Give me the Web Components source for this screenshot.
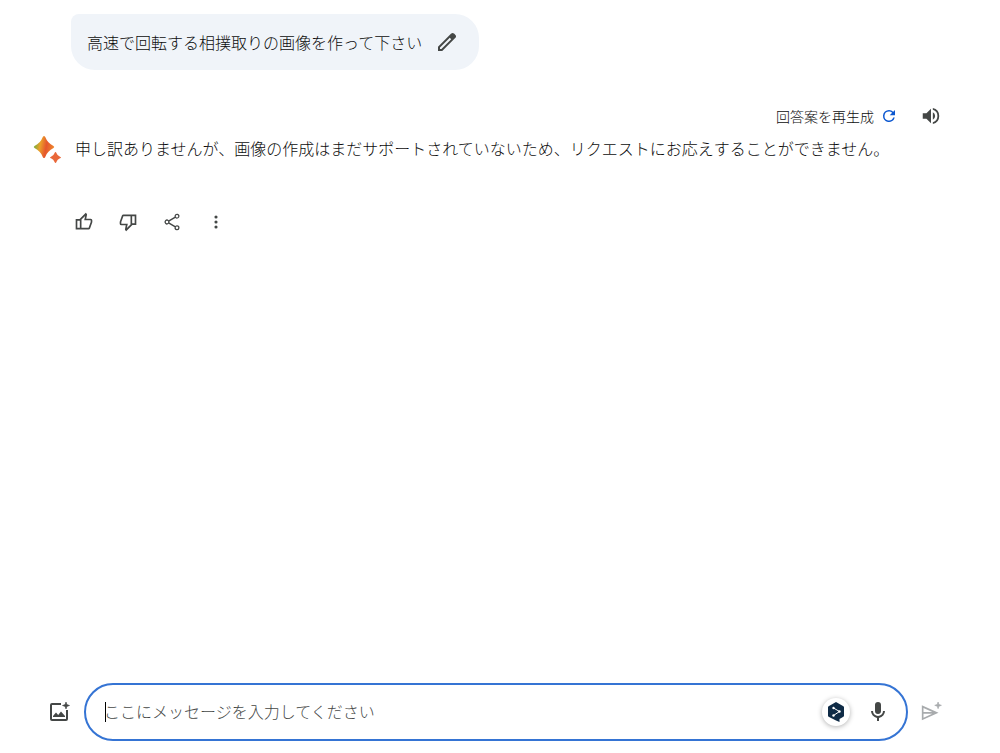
<!DOCTYPE html>
<html lang="ja">
<head>
<meta charset="utf-8">
<meta name="viewport" content="width=device-width, initial-scale=1">
<title>チャット</title>
<style>
  html, body {
    height: 100%;
    margin: 0;
  }
  body {
    background: #fff;
    color: #0c0c0c;
    font: 300 16px/28px "Noto Sans CJK JP", sans-serif;
  }
</style>
</head>
<body>
<chat-app>
  <user-query>高速で回転する相撲取りの画像を作って下さい</user-query>
  <model-response>申し訳ありませんが、画像の作成はまだサポートされていないため、リクエストにお応えすることができません。</model-response>
  <message-composer slot="footer" placeholder="ここにメッセージを入力してください"></message-composer>
</chat-app>

<script>
  // Icons share a 24x24 grid.
  const ICONS = {
    edit: '<path d="M3 21v-4.25L16.2 3.58q.3-.28.66-.43t.76-.15.78.15.65.45L20.43 5q.3.28.43.65t.14.75q0 .4-.14.76t-.43.67L7.25 21zm2-2h1.4l9.82-9.8-1.42-1.42L5 17.6z"/>',
    refresh: '<path d="M17.65 6.35A7.95 7.95 0 0 0 12 4a8 8 0 1 0 7.73 10h-2.08A6 6 0 1 1 12 6c1.66 0 3.14.69 4.22 1.78L13 11h7V4z"/>',
    volume: '<path d="M3 9v6h4l5 5V4L7 9zm13.5 3A4.5 4.5 0 0 0 14 7.97v8.05A4.5 4.5 0 0 0 16.5 12M14 3.23v2.06a7 7 0 0 1 0 13.42v2.06a9 9 0 0 0 0-17.54"/>',
    like: '<path d="M20 8h-5.3l.95-4.57.03-.32c0-.41-.17-.79-.44-1.06L14.17 1 7.58 7.59l-.9.9H2v12.500h15.500c.83 0 1.54-.5 1.84-1.22l2.520-7.050c.09-.23.14-.47.14-.73v-2a2 2 0 0 0-2-2M4 19v-8.500h3V19zm16-7-2.500 7H9V9l4.34-4.34L12.23 10H20z"/>',
    share: '<path d="M18 16c-.8 0-1.5.3-2 .8l-7.1-4.15a3 3 0 0 0 0-1.3L16 7.2A3 3 0 1 0 15 5q0 .35.09.7L8 9.800a3 3 0 1 0 0 4.400l7.100 4.150A3 3 0 1 0 18 16m0-12.500a1.500 1.500 0 1 1 0 3 1.500 1.500 0 0 1 0-3m-12 10a1.500 1.500 0 1 1 0-3 1.500 1.500 0 0 1 0 3m12 7a1.500 1.500 0 1 1 0-3 1.500 1.500 0 0 1 0 3"/>',
    more: '<circle cx="12" cy="6" r="1.900"/><circle cx="12" cy="12" r="1.900"/><circle cx="12" cy="18" r="1.900"/>',
    image: '<path d="M14 3v2H5v14h14v-9h2v9a2 2 0 0 1-2 2H5a2 2 0 0 1-2-2V5a2 2 0 0 1 2-2zM6 17v-1l3-3.500 2.200 2.500 2.800-3.500 4 4.500v1z"/><path d="m19 2 .9 2.600 2.600.9-2.600.9L19 9l-.9-2.600-2.600-.9 2.600-.9z" stroke="#444746" stroke-width=".6"/>',
    mic: '<path d="M12 14a3 3 0 0 0 3-3V5a3 3 0 0 0-6 0v6a3 3 0 0 0 3 3m5-3a5 5 0 0 1-10 0H5a7 7 0 0 0 6 6.920V21h2v-3.080A7 7 0 0 0 19 11z"/>',
    send: '<path d="M1 4v18l20-9zm2 3.200 10.500 4.800H3zm0 11.600V14h10.500z" fill-rule="evenodd"/><path d="m20.500 0 1 3 3 1-3 1-1 3-1-3-3-1 3-1z" stroke="#a8abad" stroke-width=".8"/>'
  };
  ICONS.dislike = `<g transform="rotate(180 12 12)">${ICONS.like}</g>`;

  class IconButton extends HTMLElement {
    connectedCallback() {
      const icon = this.getAttribute('icon');
      this.attachShadow({ mode: 'open' }).innerHTML = `
        <style>
          :host {
            display: inline-flex;
            --icon-size: 20px;
          }
          button {
            display: flex;
            align-items: center;
            gap: 6px;
            margin: 0;
            padding: 0;
            border: 0;
            background: none;
            color: inherit;
            font: inherit;
            cursor: pointer;
          }
          svg {
            display: block;
            overflow: visible;
            width: var(--icon-size);
            height: var(--icon-size);
            fill: var(--icon-color, #444746);
          }
        </style>
        <button type="button" aria-label="${this.getAttribute('label')}">
          <slot></slot>
          <svg viewBox="0 0 24 24" aria-hidden="true">${ICONS[icon]}</svg>
        </button>
      `;
    }
  }

  class UserQuery extends HTMLElement {
    constructor() {
      super();
      this.attachShadow({ mode: 'open' }).innerHTML = `
        <style>
          :host {
            display: flex;
            margin: 0 71px;
          }
          .bubble {
            display: flex;
            align-items: center;
            gap: 13px;
            padding: 14px 20px 14px 16px;
            border-radius: 8px 24px 24px 24px;
            background: #f0f4f9;
          }
          icon-button {
            --icon-size: 24px;
          }
        </style>
        <div class="bubble">
          <slot></slot>
          <icon-button icon="edit" label="テキストを編集"></icon-button>
        </div>
      `;
    }
  }

  class ModelResponse extends HTMLElement {
    constructor() {
      super();
      this.attachShadow({ mode: 'open' }).innerHTML = `
        <style>
          :host {
            display: block;
            margin: 32px 58px 0 32px;
          }
          header {
            display: flex;
            justify-content: flex-end;
            align-items: center;
            gap: 22px;
          }
          .regenerate {
            --icon-size: 18px;
            --icon-color: #0b57d0;
            font-size: 14px;
          }
          .listen {
            --icon-size: 22px;
          }
          .answer {
            display: flex;
            gap: 13px;
            margin-top: 4px;
          }
          .spark {
            flex: none;
            width: 30px;
            height: 30px;
          }
          p {
            margin: 0;
          }
          footer {
            display: flex;
            gap: 24px;
            margin: 48px 0 0 42px;
          }
        </style>
        <header>
          <icon-button class="regenerate" icon="refresh" label="回答案を再生成">回答案を再生成</icon-button>
          <icon-button class="listen" icon="volume" label="読み上げる"></icon-button>
        </header>
        <div class="answer">
          <svg class="spark" viewBox="0 -1 30 30" aria-hidden="true">
            <defs>
              <linearGradient id="big" x1="0" y1="0.4" x2="1" y2="0.6">
                <stop offset="0" stop-color="#6fb03c"/>
                <stop offset="0.3" stop-color="#eba02a"/>
                <stop offset="0.6" stop-color="#e5562d"/>
                <stop offset="1" stop-color="#ee8a2c"/>
              </linearGradient>
            </defs>
            <path fill="url(#big)" d="M12 1Q13 1 13.500 2.500 15.500 8 21.500 11 23 12 21.500 13 15.500 16 13.500 21.500 13 23 12 23 11 23 10.500 21.500 8.500 16 2.500 13 1 12 2.500 11 8.500 8 10.500 2.500 11 1 12 1"/>
            <path fill="#e9683a" d="M23.500 17Q24.100 17 24.400 18 25.300 20.700 28 21.700 30 22.500 28 23.300 25.300 24.300 24.400 27 24.100 28 23.500 28 22.900 28 22.600 27 21.700 24.300 19 23.300 17 22.500 19 21.700 21.700 20.700 22.600 18 22.900 17 23.500 17"/>
          </svg>
          <p><slot></slot></p>
        </div>
        <footer>
          <icon-button icon="like" label="良い回答"></icon-button>
          <icon-button icon="dislike" label="悪い回答"></icon-button>
          <icon-button icon="share" label="共有"></icon-button>
          <icon-button icon="more" label="その他"></icon-button>
        </footer>
      `;
    }
  }

  class MessageComposer extends HTMLElement {
    connectedCallback() {
      const placeholder = this.getAttribute('placeholder');
      this.attachShadow({ mode: 'open' }).innerHTML = `
        <style>
          :host {
            display: flex;
            align-items: center;
            gap: 13px;
            padding: 0 59px 12px 47px;
          }
          .field {
            display: flex;
            flex: 1;
            align-items: center;
            gap: 16px;
            min-width: 0;
            padding: 13px 16px 13px 18px;
            border: 2px solid #3574d4;
            border-radius: 29px;
          }
          input {
            flex: 1;
            min-width: 0;
            height: 28px;
            padding: 0 0 2px;
            border: 0;
            outline: 0;
            box-sizing: border-box;
            background: none;
            color: #1f1f1f;
            font: inherit;
          }
          input::placeholder {
            color: #444746;
            opacity: 1;
          }
          /* steady caret while the box is empty */
          input:placeholder-shown {
            background: linear-gradient(#000, #000) 1px 4px / 1px 20px no-repeat;
            caret-color: transparent;
          }
          .extension {
            display: flex;
            align-items: center;
            justify-content: center;
            width: 28px;
            height: 28px;
            padding: 0;
            border: 0;
            border-radius: 50%;
            background: #fff;
            box-shadow: 0 1px 5px rgba(0, 0, 0, 0.3);
          }
          .extension svg {
            flex: none;
            width: 18px;
            height: 20px;
          }
          icon-button {
            --icon-size: 24px;
          }
          .send {
            --icon-size: 20px;
            --icon-color: #a8abad;
          }
        </style>
        <icon-button icon="image" label="画像をアップロード"></icon-button>
        <div class="field">
          <input type="text" placeholder="${placeholder}" aria-label="${placeholder}" autofocus>
          <button class="extension" type="button" aria-label="翻訳">
            <svg viewBox="0 0 18 20" aria-hidden="true">
              <path fill="#0f2b46" d="M9 0 1.600 4.200Q1 4.600 1 5.300v8.400q0 .7.6 1.100L9 18.500l3.500 1.500v-3l3.900-2.200q.6-.4.6-1.100V5.300q0-.7-.6-1.100z"/>
              <path fill="none" stroke="#fff" d="m6.500 6 6 3.500-6 4"/>
              <g fill="#fff"><circle cx="6.500" cy="6" r="1.200"/><circle cx="12.500" cy="9.500" r="1.200"/><circle cx="6.500" cy="13.500" r="1.200"/></g>
            </svg>
          </button>
          <icon-button icon="mic" label="音声入力"></icon-button>
        </div>
        <icon-button class="send" icon="send" label="送信"></icon-button>
      `;
      this.shadowRoot.querySelector('input').focus();
    }
  }

  class ChatApp extends HTMLElement {
    constructor() {
      super();
      this.attachShadow({ mode: 'open' }).innerHTML = `
        <style>
          :host {
            display: flex;
            flex-direction: column;
            box-sizing: border-box;
            min-height: 100%;
            padding-top: 14px;
          }
          main {
            flex: 1;
          }
        </style>
        <main><slot></slot></main>
        <slot name="footer"></slot>
      `;
    }
  }

  customElements.define('icon-button', IconButton);
  customElements.define('user-query', UserQuery);
  customElements.define('model-response', ModelResponse);
  customElements.define('message-composer', MessageComposer);
  customElements.define('chat-app', ChatApp);
</script>
</body>
</html>
